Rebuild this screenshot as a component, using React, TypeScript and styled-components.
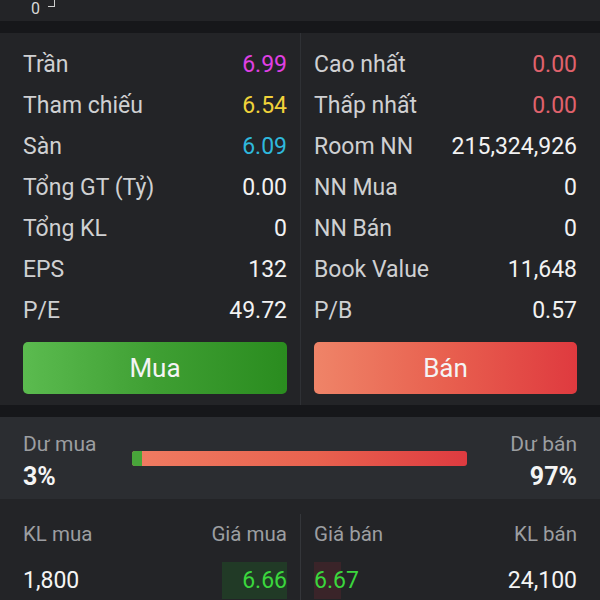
import styled, { createGlobalStyle } from "styled-components";

const GlobalStyle = createGlobalStyle`
  html, body {
    margin: 0;
    padding: 0;
    background: #16171a;
  }
  body {
    font-family: Roboto, "Noto Sans", "Liberation Sans", sans-serif;
  }
`;

const Screen = styled.div`
  width: 600px;
  height: 600px;
  overflow: hidden;
  display: flex;
  flex-direction: column;
  background: #16171a;
`;

const AxisStrip = styled.div`
  height: 21px;
  background: #232427;
  display: flex;
  align-items: flex-start;
  padding-left: 31px;
  gap: 8px;
  margin-bottom: 12px;
`;

const AxisLabel = styled.span`
  font-size: 16px;
  line-height: 18px;
  color: #d8d8d8;
`;

const AxisTick = styled.span`
  width: 6px;
  height: 7px;
  border-right: 1.5px solid #cfcfcf;
  border-bottom: 1.5px solid #cfcfcf;
  margin-top: -1px;
`;

const StatsPanel = styled.div`
  display: grid;
  grid-template-columns: 1fr 1fr;
  background: #232427;
  margin-bottom: 12px;
`;

const Column = styled.div<{ side: "left" | "right" }>`
  display: flex;
  flex-direction: column;
  padding: ${(p) => (p.side === "left" ? "11px 13px 11px 23px" : "11px 23px 11px 13px")};
  border-left: ${(p) => (p.side === "right" ? "1px solid #2f3135" : "none")};
`;

const StatRow = styled.div`
  height: 41px;
  display: flex;
  align-items: center;
  justify-content: space-between;
  font-size: 23px;
`;

const StatLabel = styled.span`
  color: #cfd0d2;
`;

const StatValue = styled.span<{ tone?: string }>`
  color: ${(p) => p.tone ?? "#f2f2f2"};
`;

const TradeButton = styled.button<{ kind: "buy" | "sell" }>`
  margin-top: 11px;
  height: 52px;
  border: none;
  border-radius: 5px;
  font-family: inherit;
  font-size: 26px;
  color: #f4f4f4;
  background: ${(p) =>
    p.kind === "buy"
      ? "linear-gradient(90deg, #5bbb4f 0%, #3f9f33 50%, #2a8c1f 100%)"
      : "linear-gradient(90deg, #ef8468 0%, #e8604f 50%, #df3a3f 100%)"};
`;

const DepthPanel = styled.div`
  height: 82px;
  background: #2b2d31;
  display: grid;
  grid-template-columns: 109px 1fr 110px;
  align-items: center;
  padding: 0 23px;
`;

const DepthSide = styled.div<{ align: "left" | "right" }>`
  display: flex;
  flex-direction: column;
  align-items: ${(p) => (p.align === "left" ? "flex-start" : "flex-end")};
  gap: 9px;
  margin-top: 6px;
`;

const DepthLabel = styled.span`
  font-size: 21px;
  color: #9c9ea1;
  line-height: 22px;
`;

const DepthPct = styled.span`
  font-size: 25px;
  font-weight: 700;
  color: #f4f4f4;
  line-height: 26px;
`;

const Bar = styled.div`
  height: 15px;
  border-radius: 3px;
  overflow: hidden;
  display: flex;
  background: linear-gradient(90deg, #f07c62 0%, #e8624f 55%, #de3b40 100%);
`;

const BarBuy = styled.div`
  height: 100%;
  background: #48a53a;
`;

const BookPanel = styled.div`
  flex: 1;
  background: #232427;
  display: grid;
  grid-template-columns: 1fr 1fr;
  padding-top: 15px;
`;

const BookHalf = styled.div<{ side: "left" | "right" }>`
  display: grid;
  grid-template-columns: 1fr 1fr;
  grid-auto-rows: 40px 37px;
  row-gap: 8px;
  align-items: center;
  padding: ${(p) => (p.side === "left" ? "0 13px 0 23px" : "0 23px 0 13px")};
  border-left: ${(p) => (p.side === "right" ? "1px solid #34363a" : "none")};
`;

const BookHead = styled.span<{ align: "left" | "right" }>`
  font-size: 20.5px;
  color: #9c9ea1;
  text-align: ${(p) => p.align};
`;

const BookCell = styled.span<{ align: "left" | "right" }>`
  font-size: 23px;
  color: #f4f4f4;
  text-align: ${(p) => p.align};
`;

const PriceCell = styled.div<{ align: "left" | "right" }>`
  position: relative;
  height: 37px;
  display: flex;
  align-items: center;
  justify-content: ${(p) => (p.align === "left" ? "flex-start" : "flex-end")};
  font-size: 23px;
  color: #3bd63d;
`;

const VolumeFill = styled.div<{ align: "left" | "right"; tint: string }>`
  position: absolute;
  top: 0;
  bottom: 0;
  ${(p) => (p.align === "left" ? "left: 0;" : "right: 0;")}
  background: ${(p) => p.tint};
`;

const PriceText = styled.span`
  position: relative;
`;

const leftStats = [
  { label: "Trần", value: "6.99", tone: "#e040e4" },
  { label: "Tham chiếu", value: "6.54", tone: "#f0d23a" },
  { label: "Sàn", value: "6.09", tone: "#2fb8dc" },
  { label: "Tổng GT (Tỷ)", value: "0.00" },
  { label: "Tổng KL", value: "0" },
  { label: "EPS", value: "132" },
  { label: "P/E", value: "49.72" },
];

const rightStats = [
  { label: "Cao nhất", value: "0.00", tone: "#e0626c" },
  { label: "Thấp nhất", value: "0.00", tone: "#e0626c" },
  { label: "Room NN", value: "215,324,926" },
  { label: "NN Mua", value: "0" },
  { label: "NN Bán", value: "0" },
  { label: "Book Value", value: "11,648" },
  { label: "P/B", value: "0.57" },
];

const buyPct = 3;

export default function App() {
  return (
    <Screen>
      <GlobalStyle />
      <AxisStrip>
        <AxisLabel>0</AxisLabel>
        <AxisTick />
      </AxisStrip>

      <StatsPanel>
        <Column side="left">
          {leftStats.map((s) => (
            <StatRow key={s.label}>
              <StatLabel>{s.label}</StatLabel>
              <StatValue tone={s.tone}>{s.value}</StatValue>
            </StatRow>
          ))}
          <TradeButton kind="buy">Mua</TradeButton>
        </Column>
        <Column side="right">
          {rightStats.map((s) => (
            <StatRow key={s.label}>
              <StatLabel>{s.label}</StatLabel>
              <StatValue tone={s.tone}>{s.value}</StatValue>
            </StatRow>
          ))}
          <TradeButton kind="sell">Bán</TradeButton>
        </Column>
      </StatsPanel>

      <DepthPanel>
        <DepthSide align="left">
          <DepthLabel>Dư mua</DepthLabel>
          <DepthPct>{buyPct}%</DepthPct>
        </DepthSide>
        <Bar>
          <BarBuy style={{ width: `${buyPct}%` }} />
        </Bar>
        <DepthSide align="right">
          <DepthLabel>Dư bán</DepthLabel>
          <DepthPct>{100 - buyPct}%</DepthPct>
        </DepthSide>
      </DepthPanel>

      <BookPanel>
        <BookHalf side="left">
          <BookHead align="left">KL mua</BookHead>
          <BookHead align="right">Giá mua</BookHead>
          <BookCell align="left">1,800</BookCell>
          <PriceCell align="right">
            <VolumeFill align="right" tint="#213a26" style={{ width: 65 }} />
            <PriceText>6.66</PriceText>
          </PriceCell>
        </BookHalf>
        <BookHalf side="right">
          <BookHead align="left">Giá bán</BookHead>
          <BookHead align="right">KL bán</BookHead>
          <PriceCell align="left">
            <VolumeFill align="left" tint="#3a2429" style={{ width: 27 }} />
            <PriceText>6.67</PriceText>
          </PriceCell>
          <BookCell align="right">24,100</BookCell>
        </BookHalf>
      </BookPanel>
    </Screen>
  );
}
